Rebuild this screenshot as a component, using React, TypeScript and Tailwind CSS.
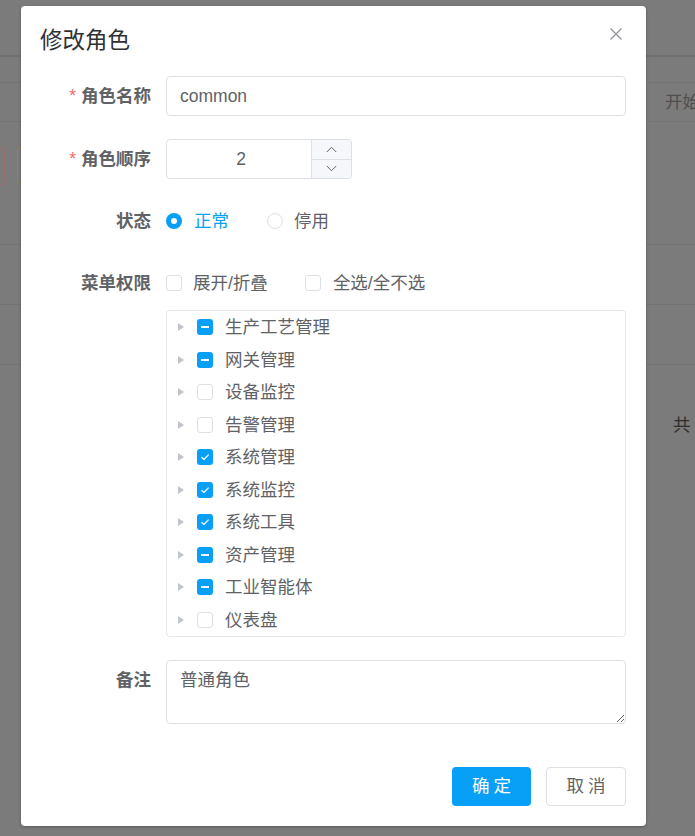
import React from "react";

type CheckState = "checked" | "half" | "none";

const FONT = { fontFamily: '"Liberation Sans", "Noto Sans CJK SC", sans-serif' };

const menuTree: { label: string; state: CheckState }[] = [
  { label: "生产工艺管理", state: "half" },
  { label: "网关管理", state: "half" },
  { label: "设备监控", state: "none" },
  { label: "告警管理", state: "none" },
  { label: "系统管理", state: "checked" },
  { label: "系统监控", state: "checked" },
  { label: "系统工具", state: "checked" },
  { label: "资产管理", state: "half" },
  { label: "工业智能体", state: "half" },
  { label: "仪表盘", state: "none" },
];

const CheckBox = ({ state }: { state: CheckState }) => {
  if (state === "none") {
    return <span className="block w-4 h-4 rounded-[3px] border border-[#dcdfe6] bg-white shrink-0" />;
  }
  return (
    <span className="w-4 h-4 rounded-[3px] bg-[#08a0f7] shrink-0 flex items-center justify-center">
      {state === "half" ? (
        <span className="w-[8px] h-[2px] bg-white" />
      ) : (
        <svg width="10" height="8" viewBox="0 0 10 8" fill="none">
          <path d="M1.5 4.2 L4 6.4 L8.6 1.6" stroke="white" strokeWidth="1.3" />
        </svg>
      )}
    </span>
  );
};

const FormItem = ({
  label,
  required,
  children,
  className = "",
}: {
  label: string;
  required?: boolean;
  children: React.ReactNode;
  className?: string;
}) => (
  <div className={`flex ${className}`}>
    <label className="w-[125px] shrink-0 pr-[15px] h-[40px] flex items-center justify-end text-[17.5px] font-bold text-[#606266]">
      {required && <span className="text-[#f56c6c] mr-[5px] font-normal">*</span>}
      {label}
    </label>
    <div className="flex-1 min-w-0">{children}</div>
  </div>
);

const Backdrop = () => (
  <div className="h-[836px] bg-[#7b7b7b] overflow-hidden flex flex-col">
    <div className="h-[57px] border-b-2 border-[#707070] shrink-0" />
    <div className="h-[26px] border-b border-[#747474] shrink-0" />
    <div className="h-[39px] border-b border-[#747474] shrink-0 flex items-center overflow-hidden">
      <span className="text-[17.5px] text-[#4f4f4f] whitespace-nowrap pl-[665px] shrink-0">开始</span>
    </div>
    <div className="h-[123px] border-b border-[#747474] shrink-0 pt-[25px] flex">
      <div className="w-[40px] h-[38px] ml-[-35px] rounded-[4px] border border-[#9a6c6c] shrink-0" />
      <div className="w-[40px] h-[38px] ml-[12px] rounded-[4px] border border-[#97805f] shrink-0" />
    </div>
    <div className="h-[60px] border-b border-[#747474] shrink-0" />
    <div className="h-[60px] border-b border-[#747474] shrink-0" />
    <div className="h-[73px] shrink-0 flex items-end justify-end">
      <span className="text-[17.5px] text-[#2e2e2e] w-[22px]">共</span>
    </div>
  </div>
);

export default function App() {
  return (
    <div className="relative" style={FONT}>
      <Backdrop />
      <div className="absolute inset-0 pl-[21px] pt-[6px]">
        <div className="relative w-[625px] bg-white rounded-[4px] shadow-[0_1px_3px_rgba(0,0,0,0.3)]">
          <div className="h-[50px] pt-[20px] px-[19px]">
            <span className="block leading-[30px] text-[22.5px] text-[#303133]">修改角色</span>
          </div>
          <button className="absolute right-[24px] top-[22px] w-[12px] h-[12px]">
            <svg width="12" height="12" viewBox="0 0 12 12">
              <path d="M0.5 0.5 L11.5 11.5 M11.5 0.5 L0.5 11.5" stroke="#909399" strokeWidth="1.3" />
            </svg>
          </button>

          <div className="pt-[20px] px-[20px]">
            <FormItem label="角色名称" required className="mb-[23px]">
              <div className="h-[40px] rounded-[4px] border border-[#dcdfe6] px-[13px] flex items-center text-[17.5px] text-[#606266]">
                common
              </div>
            </FormItem>

            <FormItem label="角色顺序" required className="mb-[22px]">
              <div className="w-[186px] h-[40px] rounded-[4px] border border-[#dcdfe6] flex">
                <div className="flex-1 flex items-center justify-center text-[17.5px] text-[#606266] pl-[4px]">2</div>
                <div className="w-[40px] border-l border-[#dcdfe6] bg-[#f5f7fa] flex flex-col rounded-r-[4px]">
                  <div className="flex-1 flex items-center justify-center border-b border-[#dcdfe6]">
                    <svg width="11" height="7" viewBox="0 0 11 7">
                      <path d="M0.8 6 L5.5 1.3 L10.2 6" stroke="#606266" strokeWidth="1" fill="none" />
                    </svg>
                  </div>
                  <div className="flex-1 flex items-center justify-center">
                    <svg width="11" height="7" viewBox="0 0 11 7">
                      <path d="M0.8 1 L5.5 5.7 L10.2 1" stroke="#606266" strokeWidth="1" fill="none" />
                    </svg>
                  </div>
                </div>
              </div>
            </FormItem>

            <FormItem label="状态" className="mb-[22px]">
              <div className="h-[40px] flex items-center text-[17.5px]">
                <span className="w-4 h-4 rounded-full bg-[#08a0f7] flex items-center justify-center">
                  <span className="w-[6px] h-[6px] rounded-full bg-white" />
                </span>
                <span className="ml-[12px] text-[#08a0f7]">正常</span>
                <span className="ml-[38px] w-4 h-4 rounded-full border border-[#dcdfe6]" />
                <span className="ml-[11px] text-[#606266]">停用</span>
              </div>
            </FormItem>

            <FormItem label="菜单权限" className="mb-[23px]">
              <div className="h-[40px] flex items-center text-[17.5px] text-[#606266]">
                <CheckBox state="none" />
                <span className="ml-[11px]">展开/折叠</span>
                <span className="ml-[37px]">
                  <CheckBox state="none" />
                </span>
                <span className="ml-[12px]">全选/全不选</span>
              </div>
              <div className="mt-[7px] rounded-[4px] border border-[#e4e7ed] flex flex-col">
                {menuTree.map((node) => (
                  <div key={node.label} className="h-[32.5px] flex items-center pl-[11px] text-[17.5px] text-[#606266]">
                    <svg width="6" height="8" viewBox="0 0 6 8" className="shrink-0">
                      <path d="M0 0 L6 4 L0 8 Z" fill="#c0c4cc" />
                    </svg>
                    <span className="ml-[13px] flex">
                      <CheckBox state={node.state} />
                    </span>
                    <span className="ml-[12px]">{node.label}</span>
                  </div>
                ))}
              </div>
            </FormItem>

            <FormItem label="备注">
              <textarea
                readOnly
                defaultValue="普通角色"
                className="block w-full h-[64px] rounded-[4px] border border-[#dcdfe6] px-[13px] pt-[6px] pb-[4px] text-[17.5px] leading-[26px] text-[#606266] outline-none resize-y"
                style={FONT}
              />
            </FormItem>
          </div>

          <div className="pt-[43px] pb-[20px] pr-[20px] flex justify-end gap-[15px]">
            <button className="w-[79px] h-[39px] rounded-[4px] bg-[#08a0f7] text-white text-[17.5px] tracking-[4px] pl-[4px]">
              确定
            </button>
            <button className="w-[80px] h-[39px] rounded-[4px] border border-[#dcdfe6] bg-white text-[#606266] text-[17.5px] tracking-[4px] pl-[4px]">
              取消
            </button>
          </div>
        </div>
      </div>
    </div>
  );
}
